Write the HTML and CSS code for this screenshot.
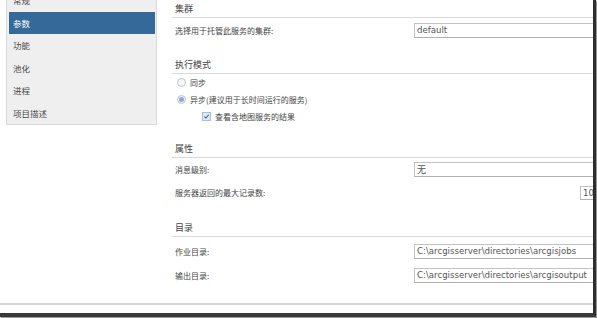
FILE: index.html
```html
<!DOCTYPE html>
<html lang="zh-CN">
<head>
<meta charset="utf-8">
<title>参数</title>
<link rel="stylesheet" href="styles.css">
</head>
<body>
<div class="window">
  <div class="content">
    <aside class="sidebar">
      <ul class="nav">
        <li class="nav-item">常规</li>
        <li class="nav-item active">参数</li>
        <li class="nav-item">功能</li>
        <li class="nav-item">池化</li>
        <li class="nav-item">进程</li>
        <li class="nav-item">项目描述</li>
      </ul>
    </aside>
    <main class="main">
      <section class="section sec-cluster">
        <h2 class="heading">集群</h2>
        <div class="row first">
          <span class="label">选择用于托管此服务的集群:</span>
          <span class="input">default</span>
        </div>
      </section>

      <section class="section sec-mode">
        <h2 class="heading">执行模式</h2>
        <div class="opt">
          <span class="radio"></span><span class="opt-text">同步</span>
        </div>
        <div class="opt">
          <span class="radio checked"></span><span class="opt-text">异步(建议用于长时间运行的服务)</span>
        </div>
        <div class="opt sub">
          <span class="check"><svg width="9" height="9" viewBox="0 0 9 9"><path d="M1.8 4.6 L3.7 6.5 L7.3 2.2" fill="none" stroke="#2f5f96" stroke-width="1.3"/></svg></span><span class="opt-text">查看含地图服务的结果</span>
        </div>
      </section>

      <section class="section sec-props">
        <h2 class="heading">属性</h2>
        <div class="row first">
          <span class="label">消息级别:</span>
          <span class="input cjk">无</span>
        </div>
        <div class="row second">
          <span class="label">服务器返回的最大记录数:</span>
          <span class="input small">1000</span>
        </div>
      </section>

      <section class="section sec-dirs">
        <h2 class="heading">目录</h2>
        <div class="row first">
          <span class="label">作业目录:</span>
          <span class="input">C:\arcgisserver\directories\arcgisjobs</span>
        </div>
        <div class="row third">
          <span class="label">输出目录:</span>
          <span class="input">C:\arcgisserver\directories\arcgisoutput</span>
        </div>
      </section>
    </main>
  </div>
</div>
</body>
</html>
```

FILE: styles.css
```css
* { box-sizing: border-box; }

html, body {
  margin: 0;
  padding: 0;
  background: #ffffff;
}

body {
  width: 597px;
  height: 318px;
  overflow: hidden;
  font-family: "Noto Sans CJK SC", "Noto Sans", sans-serif;
  color: #3d3d3d;
}

.window {
  width: 596px;
  height: 317px;
  border-right: 3px solid #2e2e2e;
  border-bottom: 4px solid #3a3a3a;
  box-shadow: 1px 1px 1px #9a9a9a;
  background: #fff;
  overflow: hidden;
}

.content {
  display: flex;
  height: 305px;
  border-bottom: 2px solid #d6d6d6;
}

.sidebar {
  width: 170px;
  flex: none;
  padding-left: 6px;
}

.nav {
  list-style: none;
  margin: -13px 0 0 0;
  padding: 1px 1px 1px 2px;
  width: 151px;
  height: 138px;
  background: #efefef;
  border: 1px solid #d8d8d8;
}

.nav-item {
  height: 22.5px;
  line-height: 22.5px;
  padding-left: 4px;
  font-size: 8.5px;
  color: #4a4a4a;
}

.nav-item.active {
  background: #35699a;
  color: #ffffff;
}

.main {
  flex: 1;
  min-width: 0;
  overflow: hidden;
  padding-left: 2px;
}

.section { margin: 0; }
.sec-mode { margin-top: 18px; }
.sec-props { margin-top: 15px; }
.sec-dirs { margin-top: 19px; }

.heading {
  margin: 0;
  font-weight: normal;
  font-size: 9px;
  line-height: 14px;
  height: 18px;
  padding: 2px 0 1px 3px;
  border-bottom: 1px solid #d9d9d9;
  color: #444;
}

.row {
  display: flex;
  align-items: center;
  height: 15px;
  padding-left: 3px;
  white-space: nowrap;
}

.row.first { margin-top: 5px; }
.sec-props .row.first { margin-top: 4px; }
.row.second { margin-top: 8px; }
.sec-dirs .row.first { margin-top: 7px; }
.row.third { margin-top: 9px; }

.label {
  width: 239px;
  flex: none;
  font-size: 8px;
  color: #444;
}

.input {
  flex: none;
  width: 200px;
  height: 15px;
  border: 1px solid #c2c2c2;
  border-bottom-color: #b0b0b0;
  background: #fff;
  font-family: "DejaVu Sans", Verdana, sans-serif;
  font-size: 8.6px;
  line-height: 13px;
  padding-left: 2px;
  color: #555;
  overflow: hidden;
}

.input.cjk {
  font-family: "Noto Sans CJK SC", sans-serif;
  font-size: 9px;
}

.input.small {
  width: 40px;
  height: 14px;
  margin-left: 166px;
}

.opt {
  display: flex;
  align-items: center;
  height: 17px;
  padding-left: 5px;
  white-space: nowrap;
}

.opt.sub { padding-left: 30px; }

.opt-text {
  font-size: 8px;
  color: #444;
  margin-left: 4px;
}

.radio {
  width: 9px;
  height: 9px;
  border-radius: 50%;
  border: 1px solid #b9c2cc;
  background: #f5f6f8;
  display: flex;
  align-items: center;
  justify-content: center;
  flex: none;
}

.radio.checked::after {
  content: "";
  width: 5px;
  height: 5px;
  border-radius: 50%;
  background: #86aed6;
}

.check {
  width: 9px;
  height: 9px;
  border: 1px solid #a9bdd3;
  background: #dce8f4;
  display: flex;
  align-items: center;
  justify-content: center;
  flex: none;
}

.check svg { display: block; }
```
